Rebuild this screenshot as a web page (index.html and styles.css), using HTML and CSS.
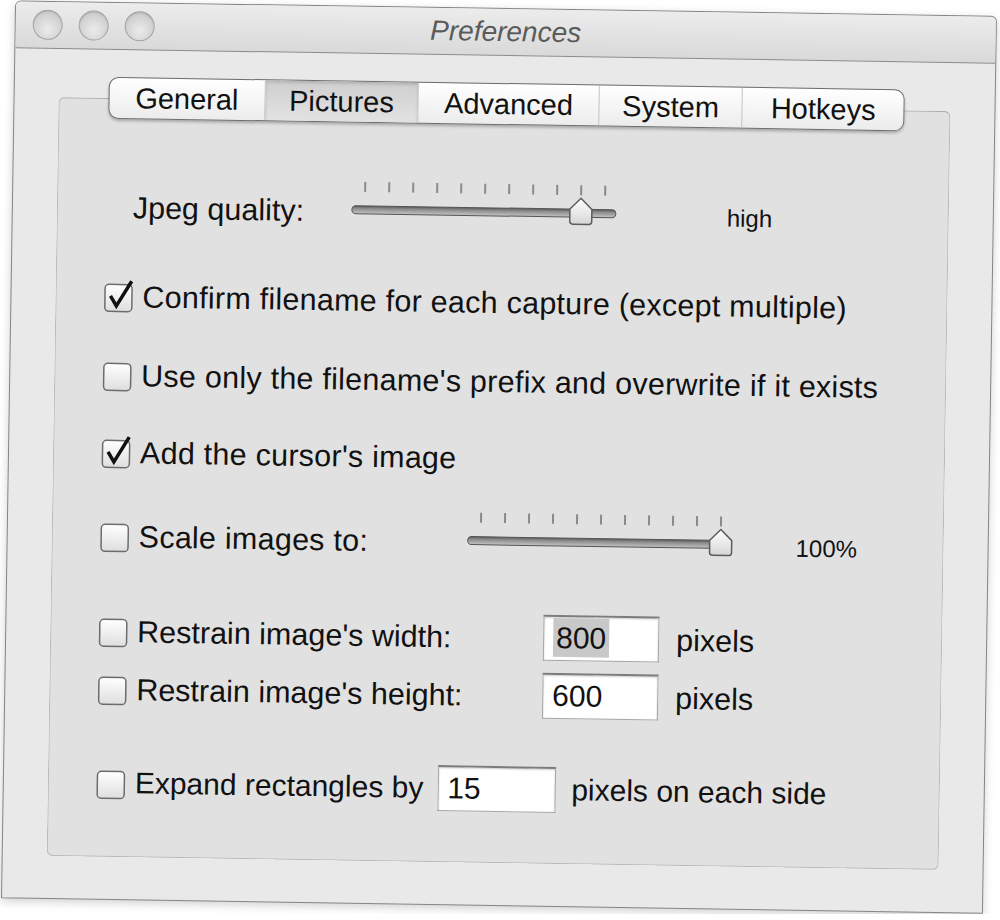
FILE: index.html
```html
<!DOCTYPE html>
<html lang="en">
<head>
	<meta charset="UTF-8">
	<title>Preferences</title>
	<link rel="stylesheet" href="styles.css">
</head>
<body>
	<div class="window">
		<div class="titlebar">
			<div class="lights">
				<span class="light"></span>
				<span class="light"></span>
				<span class="light"></span>
			</div>
			<div class="title">Preferences</div>
			<div></div>
		</div>

		<div class="content">
			<div class="group">
				<div class="tabs">
					<span class="tab" style="width:155px">General</span>
					<span class="tab current" style="width:154px">Pictures</span>
					<span class="tab" style="width:181px">Advanced</span>
					<span class="tab" style="width:144px">System</span>
					<span class="tab" style="width:162px">Hotkeys</span>
				</div>

				<!-- jpeg quality -->
				<div class="row row-jpeg">
					<span class="label label-jpeg">Jpeg quality:</span>
					<svg class="slider" width="270" height="48" viewBox="0 0 270 48">
						<defs>
							<linearGradient id="trackFill" x1="0" y1="0" x2="0" y2="1">
								<stop offset="0" stop-color="#5a5a5a"/>
								<stop offset="0.35" stop-color="#8d8d8d"/>
								<stop offset="1" stop-color="#c4c4c4"/>
							</linearGradient>
							<linearGradient id="thumbFill" x1="0" y1="0" x2="0" y2="1">
								<stop offset="0" stop-color="#ffffff"/>
								<stop offset="1" stop-color="#d6d6d6"/>
							</linearGradient>
						</defs>
						<g fill="#8a8a8a">
							<rect x="16" y="2" width="2" height="10"/><rect x="40" y="2" width="2" height="10"/>
							<rect x="64" y="2" width="2" height="10"/><rect x="88" y="2" width="2" height="10"/>
							<rect x="112" y="2" width="2" height="10"/><rect x="136" y="2" width="2" height="10"/>
							<rect x="160" y="2" width="2" height="10"/><rect x="184" y="2" width="2" height="10"/>
							<rect x="208" y="2" width="2" height="10"/><rect x="232" y="2" width="2" height="10"/>
							<rect x="256" y="2" width="2" height="10"/>
						</g>
						<rect x="4" y="26" width="264" height="8" rx="4" fill="url(#trackFill)" stroke="#555" stroke-width="1"/>
						<path d="M222,26 L233,15 L244,26 L244,38 Q244,41 241,41 L225,41 Q222,41 222,38 Z" fill="url(#thumbFill)" stroke="#5c5c5c" stroke-width="1.5"/>
					</svg>
					<span class="value value-high">high</span>
				</div>

				<div class="row row-confirm">
					<svg class="check" width="32" height="34" viewBox="0 0 32 34">
						<rect x="1.5" y="5.5" width="27" height="27" rx="4" fill="url(#boxFill)" stroke="#6c6c6c" stroke-width="1.5"/>
						<path d="M7,17 L13,27 L28,2" fill="none" stroke="#111" stroke-width="3.5" stroke-linejoin="miter"/>
					</svg>
					<span class="label">Confirm filename for each capture (except multiple)</span>
				</div>

				<div class="row row-prefix">
					<svg class="check" width="32" height="34" viewBox="0 0 32 34">
						<defs>
							<linearGradient id="boxFill" x1="0" y1="0" x2="0" y2="1">
								<stop offset="0" stop-color="#ffffff"/>
								<stop offset="1" stop-color="#dedede"/>
							</linearGradient>
						</defs>
						<rect x="1.5" y="5.5" width="27" height="27" rx="4" fill="url(#boxFill)" stroke="#6c6c6c" stroke-width="1.5"/>
					</svg>
					<span class="label">Use only the filename's prefix and overwrite if it exists</span>
				</div>

				<div class="row row-cursor">
					<svg class="check" width="32" height="34" viewBox="0 0 32 34">
						<rect x="1.5" y="5.5" width="27" height="27" rx="4" fill="url(#boxFill)" stroke="#6c6c6c" stroke-width="1.5"/>
						<path d="M7,17 L13,27 L28,2" fill="none" stroke="#111" stroke-width="3.5"/>
					</svg>
					<span class="label">Add the cursor's image</span>
				</div>

				<!-- scale -->
				<div class="row row-scale">
					<svg class="check" width="32" height="34" viewBox="0 0 32 34">
						<rect x="1.5" y="5.5" width="27" height="27" rx="4" fill="url(#boxFill)" stroke="#6c6c6c" stroke-width="1.5"/>
					</svg>
					<span class="label label-scale">Scale images to:</span>
					<svg class="slider" width="270" height="48" viewBox="0 0 270 48">
						<g fill="#8a8a8a">
							<rect x="16" y="2" width="2" height="10"/><rect x="40" y="2" width="2" height="10"/>
							<rect x="64" y="2" width="2" height="10"/><rect x="88" y="2" width="2" height="10"/>
							<rect x="112" y="2" width="2" height="10"/><rect x="136" y="2" width="2" height="10"/>
							<rect x="160" y="2" width="2" height="10"/><rect x="184" y="2" width="2" height="10"/>
							<rect x="208" y="2" width="2" height="10"/><rect x="232" y="2" width="2" height="10"/>
							<rect x="256" y="2" width="2" height="10"/>
						</g>
						<rect x="4" y="26" width="264" height="8" rx="4" fill="url(#trackFill)" stroke="#555" stroke-width="1"/>
						<path d="M246,26 L257,15 L268,26 L268,38 Q268,41 265,41 L249,41 Q246,41 246,38 Z" fill="url(#thumbFill)" stroke="#5c5c5c" stroke-width="1.5"/>
					</svg>
					<span class="value value-pct">100%</span>
				</div>

				<div class="row row-width">
					<svg class="check" width="32" height="34" viewBox="0 0 32 34">
						<rect x="1.5" y="5.5" width="27" height="27" rx="4" fill="url(#boxFill)" stroke="#6c6c6c" stroke-width="1.5"/>
					</svg>
					<span class="label label-restrain">Restrain image's width:</span>
					<div class="field"><span class="selected">800</span></div>
					<span class="label unit">pixels</span>
				</div>

				<div class="row row-height">
					<svg class="check" width="32" height="34" viewBox="0 0 32 34">
						<rect x="1.5" y="5.5" width="27" height="27" rx="4" fill="url(#boxFill)" stroke="#6c6c6c" stroke-width="1.5"/>
					</svg>
					<span class="label label-restrain">Restrain image's height:</span>
					<div class="field">600</div>
					<span class="label unit">pixels</span>
				</div>

				<div class="row row-expand">
					<svg class="check" width="32" height="34" viewBox="0 0 32 34">
						<rect x="1.5" y="5.5" width="27" height="27" rx="4" fill="url(#boxFill)" stroke="#6c6c6c" stroke-width="1.5"/>
					</svg>
					<span class="label">Expand rectangles by</span>
					<div class="field field-expand">15</div>
					<span class="label unit-expand">pixels on each side</span>
				</div>
			</div>
		</div>
	</div>
</body>
</html>
```

FILE: styles.css
```css
*{
	padding: 0;
	margin: 0;
	box-sizing: border-box;
}
html, body{
	overflow: hidden;
	background: #fff;
}
body{
	padding: 8px;
	font-family: "Lucida Grande", "Liberation Sans", Arial, sans-serif;
	color: #111;
}
.window{
	width: 982px;
	height: 898px;
	background: #e9e9e9;
	border: 1px solid #858585;
	border-radius: 6px 6px 0 0;
	box-shadow: 0 3px 10px rgba(0, 0, 0, 0.18);
	transform: rotate(0.9deg);
	overflow: hidden;
}
.titlebar{
	height: 47px;
	display: grid;
	grid-template-columns: 1fr auto 1fr;
	align-items: center;
	background: linear-gradient(#ececec, #d9d9d9);
	border-bottom: 1px solid #8a8a8a;
}
.lights{
	display: flex;
	gap: 16px;
	padding-left: 17px;
}
.light{
	width: 30px;
	height: 30px;
	border-radius: 50%;
	border: 1px solid #a2a2a2;
	background: radial-gradient(circle at 50% 65%, #ececec, #d2d2d2 60%, #bdbdbd);
	box-shadow: inset 0 1px 1px rgba(0, 0, 0, 0.12);
}
.title{
	font-size: 28px;
	font-style: italic;
	color: #5a5a5a;
}
.content{
	padding: 48px 44px 0 44px;
}
.group{
	height: 759px;
	background: #e1e1e1;
	border: 1px solid #b9b9b9;
	border-top-color: #a9a9a9;
	border-radius: 6px;
	padding-left: 47px;
}
.tabs{
	display: flex;
	height: 42px;
	width: 796px;
	margin: -22px 0 0 2px;
	border: 1.5px solid #6e6e6e;
	border-radius: 10px;
	background: linear-gradient(#ffffff, #ececec);
	box-shadow: 0 2px 3px rgba(0, 0, 0, 0.25);
	overflow: hidden;
}
.tab{
	display: flex;
	align-items: center;
	justify-content: center;
	font-size: 29px;
	color: #111;
	border-left: 1px solid #c2c2c2;
}
.tab:first-child{
	border-left: none;
}
.tab.current{
	background: linear-gradient(#cfcfcf, #e2e2e2);
	box-shadow: inset 0 2px 3px rgba(0, 0, 0, 0.15);
}
.row{
	display: flex;
	align-items: center;
	height: 40px;
}
.label{
	font-size: 30.5px;
	letter-spacing: 0.25px;
	white-space: nowrap;
}
.check{
	flex: none;
	margin-right: 7px;
}
.slider{
	flex: none;
	margin-bottom: 14px;
}
.value{
	font-size: 24px;
}
.row-jpeg{
	margin-top: 68px;
	padding-left: 28px;
}
.label-jpeg{
	width: 215px;
	letter-spacing: 0;
}
.value-high{
	margin-left: 109px;
	margin-top: 3px;
}
.row-confirm{
	margin-top: 49px;
}
.row-prefix{
	margin-top: 39px;
}
.row-cursor{
	margin-top: 37px;
}
.row-scale{
	margin-top: 44px;
}
.label-scale{
	width: 325px;
}
.value-pct{
	margin-left: 62px;
	margin-top: 4px;
}
.row-width, .row-height, .row-expand{
	height: 46px;
}
.row-width{
	margin-top: 52px;
}
.row-height{
	margin-top: 12px;
}
.row-expand{
	margin-top: 48px;
}
.row-width .label, .row-height .label{
	letter-spacing: 0;
}
.row-expand .label{
	font-size: 30px;
	letter-spacing: 0;
}
.label-restrain{
	width: 406px;
}
.field{
	flex: none;
	width: 116px;
	height: 46px;
	padding: 4px 0 0 9px;
	font-size: 30px;
	background: #fff;
	border: 1px solid #a6a6a6;
	border-top: 2px solid #7c7c7c;
	box-shadow: inset 0 1px 2px rgba(0, 0, 0, 0.2);
}
.selected{
	background: #c8c8c8;
	padding: 3px 3px;
}
.unit{
	margin-left: 17px;
}
.field-expand{
	margin-left: 14px;
	width: 118px;
}
.unit-expand{
	margin-left: 16px;
}
```
